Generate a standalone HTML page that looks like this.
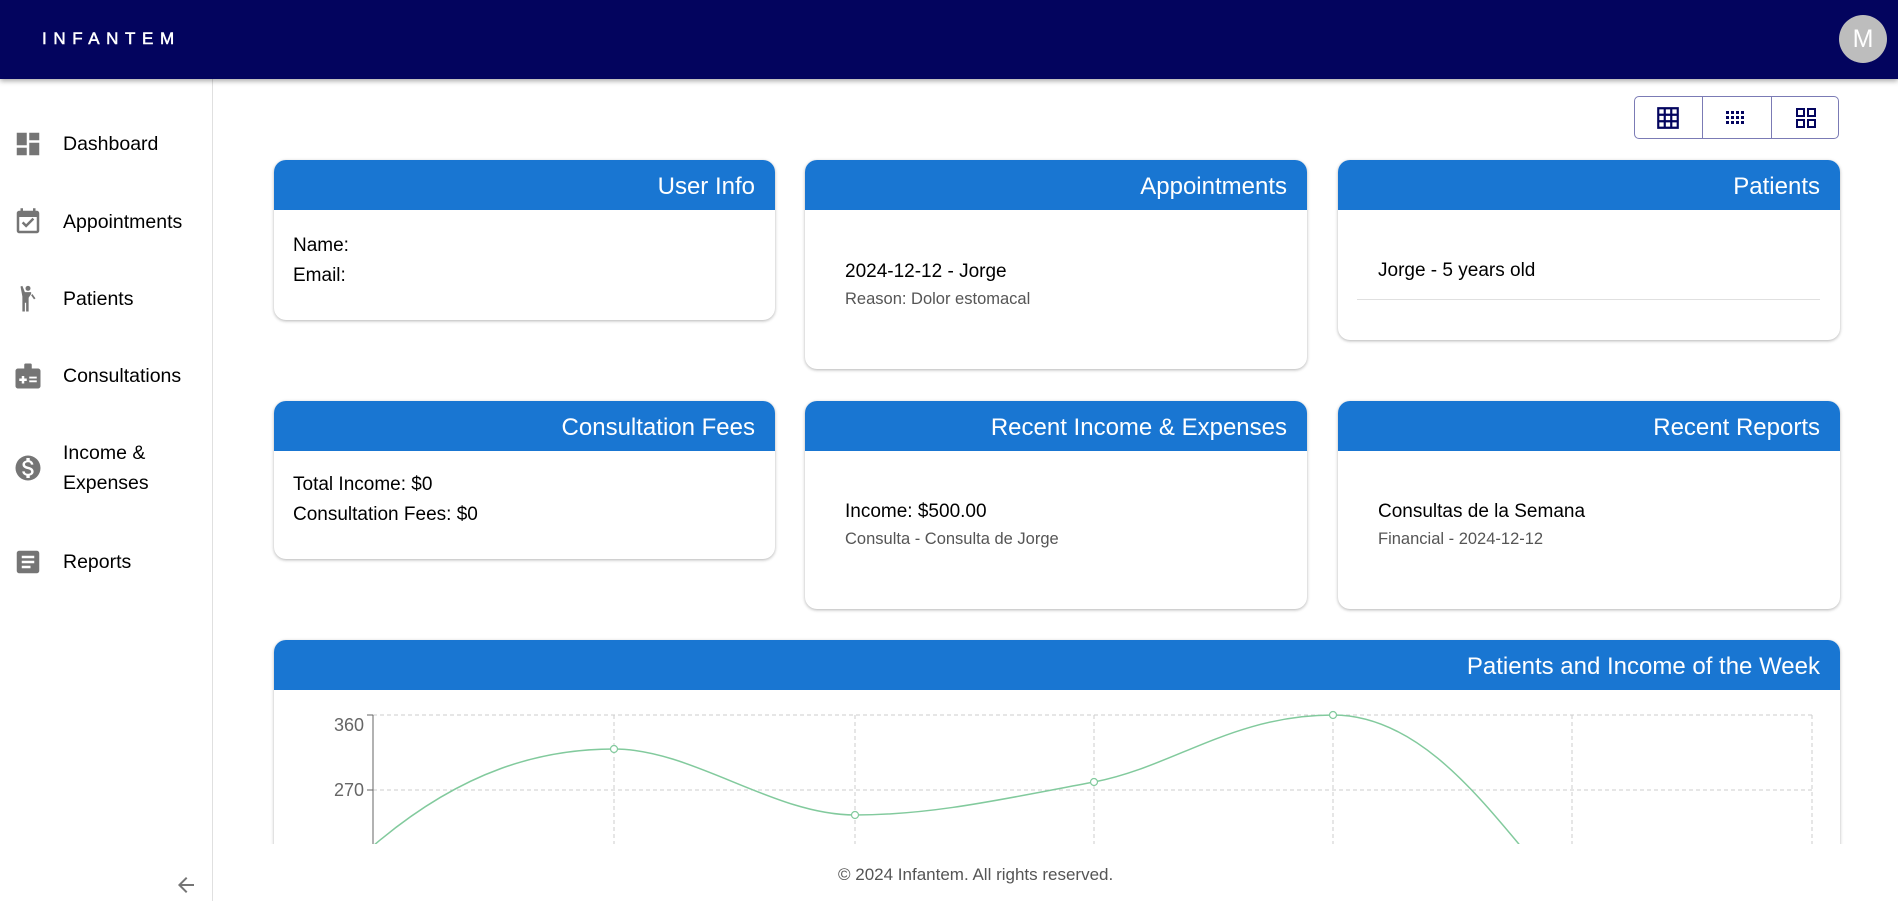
<!DOCTYPE html>
<html><head><meta charset="utf-8"><style>
*{box-sizing:border-box;margin:0;padding:0}
body{width:1898px;height:901px;overflow:hidden;background:#fff;font-family:"Liberation Sans",Arial,sans-serif;position:relative;color:#000}
.hdr{position:absolute;left:0;top:0;width:1898px;height:79px;background:#03045e;box-shadow:0 2px 5px rgba(0,0,0,.35);z-index:3}
.logo{position:absolute;left:42px;top:29px;color:#fff;font-size:17px;letter-spacing:6.6px;-webkit-text-stroke:0.5px #fff}
.av{position:absolute;left:1839px;top:15px;width:48px;height:48px;border-radius:50%;background:#bdbdbd;color:#fff;font-size:25px;text-align:center;line-height:48px}
.side{position:absolute;left:0;top:79px;width:213px;height:822px;border-right:1px solid #e0e0e0}
.nav{position:absolute;left:63px;font-size:19.5px;line-height:30px}
.ic{position:absolute;left:13px;width:30px;height:30px}
.tg{position:absolute;left:1634px;top:96px;width:205px;height:43px;border:1px solid #7b7bb5;border-radius:5px}
.tg div{position:absolute;top:0;width:1px;height:41px;background:#7b7bb5}
.card{position:absolute;background:#fff;border-radius:12px;box-shadow:0 1px 3px rgba(0,0,0,.3);overflow:hidden}
.ch{height:50px;background:#1976d2;color:#fff;font-size:24px;text-align:right;padding:13px 20px 0 0}
.t{position:absolute;font-size:19px}
.s{position:absolute;font-size:16.5px;color:#555}
.foot{position:absolute;top:865px;left:838px;font-size:17px;color:#555}
</style></head><body>
<div class="hdr"><div class="logo">INFANTEM</div><div class="av">M</div></div>
<div class="side">
<svg class="ic" style="top:50px" viewBox="0 0 24 24" fill="#757575"><path d="M3 13h8V3H3zm0 8h8v-6H3zm10 0h8V11h-8zm0-18v6h8V3z"/></svg>
<div class="nav" style="top:50px">Dashboard</div>
<svg class="ic" style="top:128px" viewBox="0 0 24 24" fill="#757575"><path d="M19 3h-1V1h-2v2H8V1H6v2H5c-1.1 0-2 .9-2 2v14c0 1.1.9 2 2 2h14c1.1 0 2-.9 2-2V5c0-1.1-.9-2-2-2zm0 16H5V8h14zm-8.5-2.5L7 13l1.4-1.4 2.1 2.1 5.1-5.1L17 10z"/></svg>
<div class="nav" style="top:128px">Appointments</div>
<svg class="ic" style="top:205px" viewBox="0 0 24 24" fill="#757575"><circle cx="12" cy="3.5" r="2"/><path d="M6 2l1.5-.5 2 5h5V8l-2 3v11h-2v-7h-1v7h-2V10L6 2z"/><path d="M15.5 8l2.5 3.5-1.2.8L14.5 9z"/></svg>
<div class="nav" style="top:205px">Patients</div>
<svg class="ic" style="top:282px" viewBox="0 0 24 24" fill="#757575"><path d="M20 6h-5V3c0-.6-.4-1-1-1h-4c-.6 0-1 .4-1 1v3H4c-1.1 0-2 .9-2 2v12c0 1.1.9 2 2 2h16c1.1 0 2-.9 2-2V8c0-1.1-.9-2-2-2zM11 16H9v2H7v-2H5v-2h2v-2h2v2h2zm8 1h-6v-1.5h6zm0-3h-6v-1.5h6z"/></svg>
<div class="nav" style="top:282px">Consultations</div>
<svg class="ic" style="top:374px" viewBox="0 0 24 24" fill="#757575"><path d="M12 2a10 10 0 100 20 10 10 0 000-20zm1.4 16.1V20h-2.7v-1.9c-1.700-.4-3.2-1.5-3.3-3.4h2c.1 1.1.8 1.9 2.7 1.9 2 0 2.4-1 2.4-1.6 0-.8-.4-1.6-2.7-2.1-2.5-.6-4.2-1.6-4.2-3.7 0-1.7 1.4-2.9 3.1-3.2V4h2.7v1.9c1.9.5 2.8 1.9 2.9 3.4h-2c-.1-1.1-.6-1.9-2.3-1.900-1.5 0-2.4.7-2.4 1.7 0 .9.7 1.4 2.7 1.9s4.2 1.4 4.2 3.9c0 1.8-1.4 2.8-3.1 3.2z"/></svg>
<div class="nav" style="top:359px">Income &amp;<br>Expenses</div>
<svg class="ic" style="top:468px" viewBox="0 0 24 24" fill="#757575"><path d="M19 3H5c-1.1 0-2 .9-2 2v14c0 1.1.9 2 2 2h14c1.1 0 2-.9 2-2V5c0-1.1-.9-2-2-2zm-5 14H7v-2h7zm3-4H7v-2h10zm0-4H7V7h10z"/></svg>
<div class="nav" style="top:468px">Reports</div>
<svg style="position:absolute;left:174px;top:794px" width="24" height="24" viewBox="0 0 24 24" fill="#757575"><path d="M20 11H7.83l5.59-5.59L12 4l-8 8 8 8 1.41-1.41L7.83 13H20z"/></svg>
</div>
<div class="tg"><div style="left:67px"></div><div style="left:136px"></div>
<svg style="position:absolute;left:20px;top:8px" width="26" height="26" viewBox="0 0 24 24" fill="#03045e"><path d="M2 2h20v20H2zm2 2v4h4V4zm6 0v4h4V4zm6 0v4h4V4zM4 10v4h4v-4zm6 0v4h4v-4zm6 0v4h4v-4zM4 16v4h4v-4zm6 0v4h4v-4zm6 0v4h4v-4z"/></svg>
<svg style="position:absolute;left:90px;top:11px" width="22" height="20" viewBox="0 0 22 20" fill="#03045e"><g><rect x="1" y="3" width="3" height="3"/><rect x="6" y="3" width="3" height="3"/><rect x="11" y="3" width="3" height="3"/><rect x="16" y="3" width="3" height="3"/><rect x="1" y="8" width="3" height="3"/><rect x="6" y="8" width="3" height="3"/><rect x="11" y="8" width="3" height="3"/><rect x="16" y="8" width="3" height="3"/><rect x="1" y="13" width="3" height="3"/><rect x="6" y="13" width="3" height="3"/><rect x="11" y="13" width="3" height="3"/><rect x="16" y="13" width="3" height="3"/></g></svg>
<svg style="position:absolute;left:159px;top:9px" width="24" height="24" viewBox="0 0 24 24" fill="#03045e"><path d="M2 2h9v9H2zm2 2v5h5V4zm9-2h9v9h-9zm2 2v5h5V4zM2 13h9v9H2zm2 2v5h5v-5zm9-2h9v9h-9zm2 2v5h5v-5z"/></svg>
</div>

<div class="card" style="left:274px;top:160px;width:501px;height:160px"><div class="ch">User Info</div>
<div class="t" style="left:19px;top:75px">Name:</div><div class="t" style="left:19px;top:105px">Email:</div></div>
<div class="card" style="left:805px;top:160px;width:502px;height:209px"><div class="ch">Appointments</div>
<div class="t" style="left:40px;top:101px">2024-12-12 - Jorge</div><div class="s" style="left:40px;top:130px">Reason: Dolor estomacal</div></div>
<div class="card" style="left:1338px;top:160px;width:502px;height:180px"><div class="ch">Patients</div>
<div class="t" style="left:40px;top:100px">Jorge - 5 years old</div>
<div style="position:absolute;left:19px;top:139px;width:463px;height:1px;background:#e0e0e0"></div></div>

<div class="card" style="left:274px;top:401px;width:501px;height:158px"><div class="ch">Consultation Fees</div>
<div class="t" style="left:19px;top:73px">Total Income: $0</div><div class="t" style="left:19px;top:103px">Consultation Fees: $0</div></div>
<div class="card" style="left:805px;top:401px;width:502px;height:208px"><div class="ch">Recent Income &amp; Expenses</div>
<div class="t" style="left:40px;top:100px">Income: $500.00</div><div class="s" style="left:40px;top:129px">Consulta - Consulta de Jorge</div></div>
<div class="card" style="left:1338px;top:401px;width:502px;height:208px"><div class="ch">Recent Reports</div>
<div class="t" style="left:40px;top:100px">Consultas de la Semana</div><div class="s" style="left:40px;top:129px">Financial - 2024-12-12</div></div>

<div style="position:absolute;left:213px;top:79px;width:1685px;height:765px;overflow:hidden;pointer-events:none">
<div class="card" style="left:61px;top:561px;width:1566px;height:300px"><div class="ch">Patients and Income of the Week</div></div>
<svg style="position:absolute;left:0;top:0" width="1685" height="765">
<g stroke="#ccc" stroke-dasharray="4 3" fill="none">
<line x1="160" y1="636" x2="1600" y2="636"/><line x1="160" y1="711" x2="1600" y2="711"/>
<line x1="401" y1="636" x2="401" y2="765"/><line x1="642" y1="636" x2="642" y2="765"/><line x1="881" y1="636" x2="881" y2="765"/><line x1="1120" y1="636" x2="1120" y2="765"/><line x1="1359" y1="636" x2="1359" y2="765"/><line x1="1599" y1="636" x2="1599" y2="765"/>
</g>
<line x1="160" y1="636" x2="160" y2="765" stroke="#666"/>
<line x1="154" y1="636" x2="160" y2="636" stroke="#666"/><line x1="154" y1="711" x2="160" y2="711" stroke="#666"/>
<text x="151" y="652" text-anchor="end" font-size="18" fill="#666" font-family="Liberation Sans,sans-serif">360</text>
<text x="151" y="717" text-anchor="end" font-size="18" fill="#666" font-family="Liberation Sans,sans-serif">270</text>
<path d="M160 767 C250 690 330 670 401 670 C480 670 560 736 642 736 C720 736 790 720 881 703 C960 688 1020 636 1120 636 C1200 636 1260 710 1310 770" fill="none" stroke="#82ca9d" stroke-width="1.5"/>
<g fill="#fff" stroke="#82ca9d" stroke-width="1.2"><circle cx="401" cy="670" r="3.5"/><circle cx="642" cy="736" r="3.5"/><circle cx="881" cy="703" r="3.5"/><circle cx="1120" cy="636" r="3.5"/></g>
</svg>
</div>
<div class="foot">© 2024 Infantem. All rights reserved.</div>
</body></html>
